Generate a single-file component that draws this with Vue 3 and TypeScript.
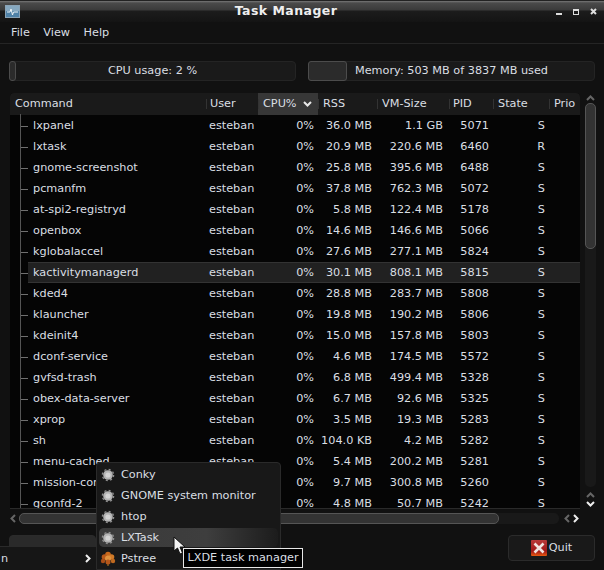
<script setup lang="ts">
interface Proc {
  name: string
  rss: string
  vm: string
  pid: number
  state: string
}

const columns = [
  { label: 'Command', cls: 'c-cmd' },
  { label: 'User', cls: 'c-user' },
  { label: 'CPU%', cls: 'c-cpu' },
  { label: 'RSS', cls: 'c-rss' },
  { label: 'VM-Size', cls: 'c-vm' },
  { label: 'PID', cls: 'c-pid' },
  { label: 'State', cls: 'c-state' },
  { label: 'Prio', cls: 'c-prio' },
]

const rows: Proc[] = [
  { name: 'lxpanel', rss: '36.0 MB', vm: '1.1 GB', pid: 5071, state: 'S' },
  { name: 'lxtask', rss: '20.9 MB', vm: '220.6 MB', pid: 6460, state: 'R' },
  { name: 'gnome-screenshot', rss: '25.8 MB', vm: '395.6 MB', pid: 6488, state: 'S' },
  { name: 'pcmanfm', rss: '37.8 MB', vm: '762.3 MB', pid: 5072, state: 'S' },
  { name: 'at-spi2-registryd', rss: '5.8 MB', vm: '122.4 MB', pid: 5178, state: 'S' },
  { name: 'openbox', rss: '14.6 MB', vm: '146.6 MB', pid: 5066, state: 'S' },
  { name: 'kglobalaccel', rss: '27.6 MB', vm: '277.1 MB', pid: 5824, state: 'S' },
  { name: 'kactivitymanagerd', rss: '30.1 MB', vm: '808.1 MB', pid: 5815, state: 'S' },
  { name: 'kded4', rss: '28.8 MB', vm: '283.7 MB', pid: 5808, state: 'S' },
  { name: 'klauncher', rss: '19.8 MB', vm: '190.2 MB', pid: 5806, state: 'S' },
  { name: 'kdeinit4', rss: '15.0 MB', vm: '157.8 MB', pid: 5803, state: 'S' },
  { name: 'dconf-service', rss: '4.6 MB', vm: '174.5 MB', pid: 5572, state: 'S' },
  { name: 'gvfsd-trash', rss: '6.8 MB', vm: '499.4 MB', pid: 5328, state: 'S' },
  { name: 'obex-data-server', rss: '6.7 MB', vm: '92.6 MB', pid: 5325, state: 'S' },
  { name: 'xprop', rss: '3.5 MB', vm: '19.3 MB', pid: 5283, state: 'S' },
  { name: 'sh', rss: '104.0 KB', vm: '4.2 MB', pid: 5282, state: 'S' },
  { name: 'menu-cached', rss: '5.4 MB', vm: '200.2 MB', pid: 5281, state: 'S' },
  { name: 'mission-control', rss: '9.7 MB', vm: '300.8 MB', pid: 5260, state: 'S' },
  { name: 'gconfd-2', rss: '4.8 MB', vm: '50.7 MB', pid: 5242, state: 'S' },
]

const menuItems = ['Conky', 'GNOME system monitor', 'htop', 'LXTask', 'Pstree']
</script>

<template>
  <div class="window">
    <header class="titlebar">
      <svg class="app-icon" width="15" height="13" viewBox="0 0 15 13">
        <rect x="0.5" y="0.5" width="14" height="12" fill="#4f82a8" stroke="#8aa3b6" />
        <rect x="1" y="1" width="13" height="5" fill="#86a8c0" />
        <path d="M2 7h3l1-3 1.500 6 1-3h4.500" fill="none" stroke="#eef4f7" stroke-width="1" />
      </svg>
      <span class="title">Task Manager</span>
      <div class="wm-buttons">
        <span class="wm-min"></span>
        <span class="wm-max"></span>
        <svg width="7" height="7" viewBox="0 0 7 7">
          <path d="M1 1l5 5M6 1L1 6" stroke="#ddd" stroke-width="2" />
        </svg>
      </div>
    </header>

    <nav class="menubar">
      <span>File</span>
      <span>View</span>
      <span>Help</span>
    </nav>

    <section class="meters">
      <div class="meter meter-cpu">
        <span class="meter-fill"></span>
        <span class="meter-text">CPU usage: 2 %</span>
      </div>
      <div class="meter meter-mem">
        <span class="meter-fill"></span>
        <span class="meter-text">Memory: 503 MB of 3837 MB used</span>
      </div>
    </section>

    <section class="table-area">
      <div class="table">
        <div class="thead">
          <div
            v-for="col in columns"
            :key="col.label"
            class="th"
            :class="col.cls"
          >
            {{ col.label }}
            <svg v-if="col.label === 'CPU%'" class="sort" width="9" height="6" viewBox="0 0 9 6">
              <path d="M1 1l3.500 3.500L8 1" fill="none" stroke="#e8e8e8" stroke-width="2" />
            </svg>
          </div>
        </div>
        <div class="tbody">
          <div
            v-for="row in rows"
            :key="row.pid"
            class="tr"
            :class="{ selected: row.name === 'kactivitymanagerd' }"
          >
            <div class="td c-cmd">
              <span class="tree-line"></span>
              <span class="cmd-name">{{ row.name }}</span>
            </div>
            <div class="td c-user">esteban</div>
            <div class="td c-cpu num">0%</div>
            <div class="td c-rss num">{{ row.rss }}</div>
            <div class="td c-vm num">{{ row.vm }}</div>
            <div class="td c-pid num">{{ row.pid }}</div>
            <div class="td c-state num">{{ row.state }}</div>
            <div class="td c-prio"></div>
          </div>
        </div>
      </div>

      <div class="vscroll">
        <svg class="arrow" width="9" height="6" viewBox="0 0 9 6">
          <path d="M1 5l3.500-3.500L8 5" fill="none" stroke="#666" stroke-width="2" />
        </svg>
        <div class="vtrough"><div class="vthumb"></div></div>
        <svg class="arrow arrow-a" width="9" height="6" viewBox="0 0 9 6">
          <path d="M1 5l3.500-3.500L8 5" fill="none" stroke="#666" stroke-width="2" />
        </svg>
        <svg class="arrow arrow-b" width="9" height="6" viewBox="0 0 9 6">
          <path d="M1 1l3.500 3.500L8 1" fill="none" stroke="#eee" stroke-width="2" />
        </svg>
      </div>

      <div class="hscroll">
        <svg class="arrow" width="6" height="9" viewBox="0 0 6 9">
          <path d="M5 1L1.500 4.500L5 8" fill="none" stroke="#666" stroke-width="2" />
        </svg>
        <div class="htrough"><div class="hthumb"></div></div>
        <svg class="arrow arrow-a" width="6" height="9" viewBox="0 0 6 9">
          <path d="M5 1L1.500 4.500L5 8" fill="none" stroke="#666" stroke-width="2" />
        </svg>
        <svg class="arrow arrow-b" width="6" height="9" viewBox="0 0 6 9">
          <path d="M1 1l3.500 3.500L1 8" fill="none" stroke="#eee" stroke-width="2" />
        </svg>
      </div>
    </section>

    <footer class="actions">
      <button class="btn btn-left"></button>
      <button class="btn btn-quit">
        <svg width="16" height="16" viewBox="0 0 16 16">
          <defs>
            <linearGradient id="quitBg" x1="0" y1="0" x2="0" y2="1">
              <stop offset="0" stop-color="#b83a3a" />
              <stop offset="0.7" stop-color="#a01818" />
              <stop offset="1" stop-color="#e85a10" />
            </linearGradient>
          </defs>
          <rect width="16" height="16" rx="1" fill="url(#quitBg)" />
          <path d="M3.500 3.500l9 9M12.500 3.500l-9 9" stroke="#f0e4e0" stroke-width="2.600" />
        </svg>
        <span>Quit</span>
      </button>
    </footer>

    <!-- desktop panel menu on top of the window -->
    <div class="start-menu">
      <span>n</span>
      <svg width="6" height="9" viewBox="0 0 6 9">
        <path d="M1 1l3.500 3.500L1 8" fill="none" stroke="#eee" stroke-width="2" />
      </svg>
    </div>
    <div class="submenu">
      <div
        v-for="item in menuItems"
        :key="item"
        class="submenu-item"
        :class="{ hover: item === 'LXTask' }"
      >
        <svg v-if="item !== 'Pstree'" class="menu-icon" width="16" height="14" viewBox="0 0 16 14">
          <circle cx="8" cy="7" r="5.600" fill="none" stroke="#8f8f8f" stroke-width="1.400" stroke-dasharray="2 2.400" />
          <circle cx="8" cy="7" r="4.800" fill="#b4b4b4" />
          <circle cx="8" cy="7" r="2.600" fill="#d4d4d4" />
        </svg>
        <svg v-else class="menu-icon" width="16" height="16" viewBox="0 0 16 16">
          <rect x="7" y="11" width="2" height="4" fill="#6b4a1c" />
          <circle cx="8" cy="3.500" r="2.800" fill="#c8681c" />
          <circle cx="4.500" cy="6" r="2.800" fill="#b8591a" />
          <circle cx="11.500" cy="6" r="2.800" fill="#d07a28" />
          <circle cx="8" cy="7.500" r="3" fill="#e0923e" />
          <circle cx="3" cy="10" r="2.200" fill="#a84e18" />
          <circle cx="13" cy="10" r="2.200" fill="#c06a20" />
          <circle cx="8" cy="11" r="2.500" fill="#b4561a" />
        </svg>
        <span>{{ item }}</span>
      </div>
    </div>
    <div class="tooltip">LXDE task manager</div>
    <svg class="cursor" width="14" height="20" viewBox="0 0 14 20">
      <path d="M1 1v14l3.500-3 2.500 6 2.500-1-2.500-6h5z" fill="#f4f4f4" stroke="#111" stroke-width="1" />
    </svg>
  </div>
</template>

<style scoped>
.window {
  position: relative;
  width: 604px;
  height: 570px;
  overflow: hidden;
  display: flex;
  flex-direction: column;
  background: #111111;
  color: #dadfe3;
  font-family: 'DejaVu Sans', sans-serif;
  font-size: 11.25px;
  line-height: 14px;
}

.titlebar {
  position: relative;
  flex: none;
  height: 22px;
  box-sizing: border-box;
  padding-right: 32px;
  display: flex;
  align-items: center;
  justify-content: center;
  background: linear-gradient(180deg, #222 0, #222 1px, #777 1px, #4a4a4a 3px, #3a3a3a 10px, #1c1c1c 11px, #141414 22px);
}

.app-icon {
  position: absolute;
  left: 5px;
  top: 5px;
}

.title {
  color: #eeeeee;
  font-size: 12.5px;
  font-weight: bold;
  letter-spacing: 0.45px;
}

.wm-buttons {
  position: absolute;
  right: 7px;
  top: 8px;
  display: flex;
  align-items: center;
  gap: 11px;
}

.wm-min {
  width: 6px;
  height: 2px;
  margin-top: 5px;
  background: #dddddd;
}

.wm-max {
  width: 6px;
  height: 6px;
  border: 1px solid #dddddd;
  border-top-width: 2px;
  box-sizing: border-box;
}

.menubar {
  flex: none;
  height: 22px;
  box-sizing: border-box;
  display: flex;
  align-items: center;
  gap: 13.5px;
  padding: 0 11px;
  border-bottom: 1px solid #252525;
}

.meters {
  flex: none;
  display: flex;
  gap: 12px;
  margin-top: 17px;
  padding-left: 9px;
}

.meter {
  position: relative;
  width: 287px;
  height: 20px;
  display: flex;
  align-items: center;
  justify-content: center;
  box-sizing: border-box;
  border: 1px solid #242424;
  border-radius: 4px;
  background: #1a1a1a;
}

.meter-fill {
  position: absolute;
  left: -1px;
  top: -1px;
  bottom: -1px;
  width: 5px;
  border: 1px solid #4c4c4c;
  border-radius: 3px;
  background: #2b2b2b;
}

.meter-mem .meter-fill {
  width: 37px;
}

.table-area {
  flex: none;
  display: grid;
  grid-template-columns: 570px 24px;
  grid-template-rows: 416px 18px;
  margin-top: 12px;
  padding-left: 10px;
}

.table {
  overflow: hidden;
  background: #050505;
  border-radius: 4px 4px 0 0;
  border-bottom: 1px solid #2a2a2a;
}

.thead,
.tr {
  display: flex;
}

.thead {
  height: 22px;
  background: #1a1a1a;
}

.th {
  position: relative;
  display: flex;
  align-items: center;
  box-sizing: border-box;
  padding-left: 5px;
}

.th + .th::before {
  content: '';
  position: absolute;
  left: 0;
  top: 6px;
  bottom: 6px;
  width: 1px;
  background: #333333;
}

.th.c-user,
.th.c-pid {
  padding-left: 4px;
}

.th.c-cpu {
  background: #373737;
}

.sort {
  margin-left: 6px;
}

.tr {
  position: relative;
  height: 21px;
  box-sizing: border-box;
  align-items: center;
}

.tr.selected::before {
  content: '';
  position: absolute;
  inset: 0 0 0 18px;
  background: #212121;
  border-top: 1px solid #333333;
  border-bottom: 1px solid #333333;
}

.td {
  position: relative;
  box-sizing: border-box;
  white-space: nowrap;
}

.c-cmd { width: 196px; }
.c-user { width: 52px; }
.c-cpu { width: 60px; }
.c-rss { width: 59px; }
.c-vm { width: 72px; }
.c-pid { width: 44px; }
.c-state { width: 56px; }
.c-prio { width: 31px; }

.td.c-user {
  padding-left: 3px;
}

.td.c-cmd {
  display: flex;
  align-items: center;
  height: 100%;
}

.tree-line {
  position: relative;
  width: 8px;
  height: 100%;
  margin: 0 5px 0 10px;
  flex: none;
}

.tree-line::before {
  content: '';
  position: absolute;
  left: 0;
  top: -1px;
  bottom: -1px;
  width: 1px;
  background: #555555;
}

.tree-line::after {
  content: '';
  position: absolute;
  left: 1px;
  top: 50%;
  width: 7px;
  height: 1px;
  background: #707070;
}

.num {
  text-align: right;
}

.td.c-cpu { padding-right: 4px; }
.td.c-rss { padding-right: 5px; }
.td.c-vm { padding-right: 6px; }
.td.c-pid { padding-right: 4px; }
.td.c-state { padding-right: 4px; }

.vscroll {
  display: flex;
  flex-direction: column;
  align-items: center;
  width: 11px;
  margin-left: 5px;
  padding-top: 2px;
}

.vtrough {
  flex: none;
  width: 11px;
  height: 384px;
  margin-top: 2px;
  background: #191919;
  border-radius: 5px;
}

.vthumb {
  width: 11px;
  height: 146px;
  box-sizing: border-box;
  background: #333333;
  border: 1px solid #555555;
  border-radius: 5px;
}

.vscroll .arrow {
  flex: none;
}

.vscroll .arrow-a {
  margin-top: 5px;
}

.vscroll .arrow-b {
  margin-top: 3px;
}

.hscroll {
  grid-column: 1 / -1;
  display: flex;
  align-items: center;
  height: 18px;
}

.htrough {
  width: 540px;
  height: 11px;
  margin-left: 3px;
  background: #191919;
  border-radius: 5px;
}

.hthumb {
  width: 480px;
  height: 11px;
  box-sizing: border-box;
  background: #333333;
  border: 1px solid #555555;
  border-radius: 5px;
}

.hscroll .arrow-a {
  margin-left: 5px;
}

.hscroll .arrow-b {
  margin-left: 3px;
}

.actions {
  flex: none;
  display: flex;
  justify-content: space-between;
  margin-top: 8px;
  padding: 0 9px;
}

.btn {
  height: 26px;
  box-sizing: border-box;
  border: 1px solid #2b2b2b;
  border-radius: 4px;
  background: #191919;
  color: inherit;
  font: inherit;
}

.btn-left {
  width: 87px;
  background: #2a2a2a;
}

.btn-quit {
  width: 87px;
  display: flex;
  align-items: center;
  justify-content: center;
  gap: 2px;
}

.start-menu {
  position: absolute;
  left: 0;
  top: 546px;
  width: 96px;
  height: 24px;
  box-sizing: border-box;
  display: flex;
  align-items: center;
  justify-content: space-between;
  padding: 0 5px 0 1px;
  background: #161616;
  border-top: 1px solid #2a2a2a;
}

.submenu {
  position: absolute;
  left: 96px;
  top: 462px;
  width: 185px;
  height: 108px;
  box-sizing: border-box;
  padding-top: 1px;
  background: #181818;
  border: 1px solid #2a2a2a;
  border-radius: 4px 4px 0 0;
}

.submenu-item {
  height: 21px;
  box-sizing: border-box;
  display: flex;
  align-items: center;
  gap: 5px;
  margin: 0 2px;
  padding-left: 1px;
  border: 1px solid transparent;
  border-width: 1px 0;
  background-clip: padding-box;
  border-radius: 5px;
}

.submenu-item.hover {
  background-image: linear-gradient(90deg, #3a3a3a 0%, #3e3e3e 60%, #1c1c1c 100%);
}

.menu-icon {
  flex: none;
  width: 16px;
}

.tooltip {
  position: absolute;
  left: 183px;
  top: 548px;
  width: 120px;
  height: 20px;
  box-sizing: border-box;
  display: flex;
  align-items: center;
  justify-content: center;
  background: #000000;
  border: 1px solid #e8e8e8;
}

.cursor {
  position: absolute;
  left: 173px;
  top: 536px;
}
</style>
